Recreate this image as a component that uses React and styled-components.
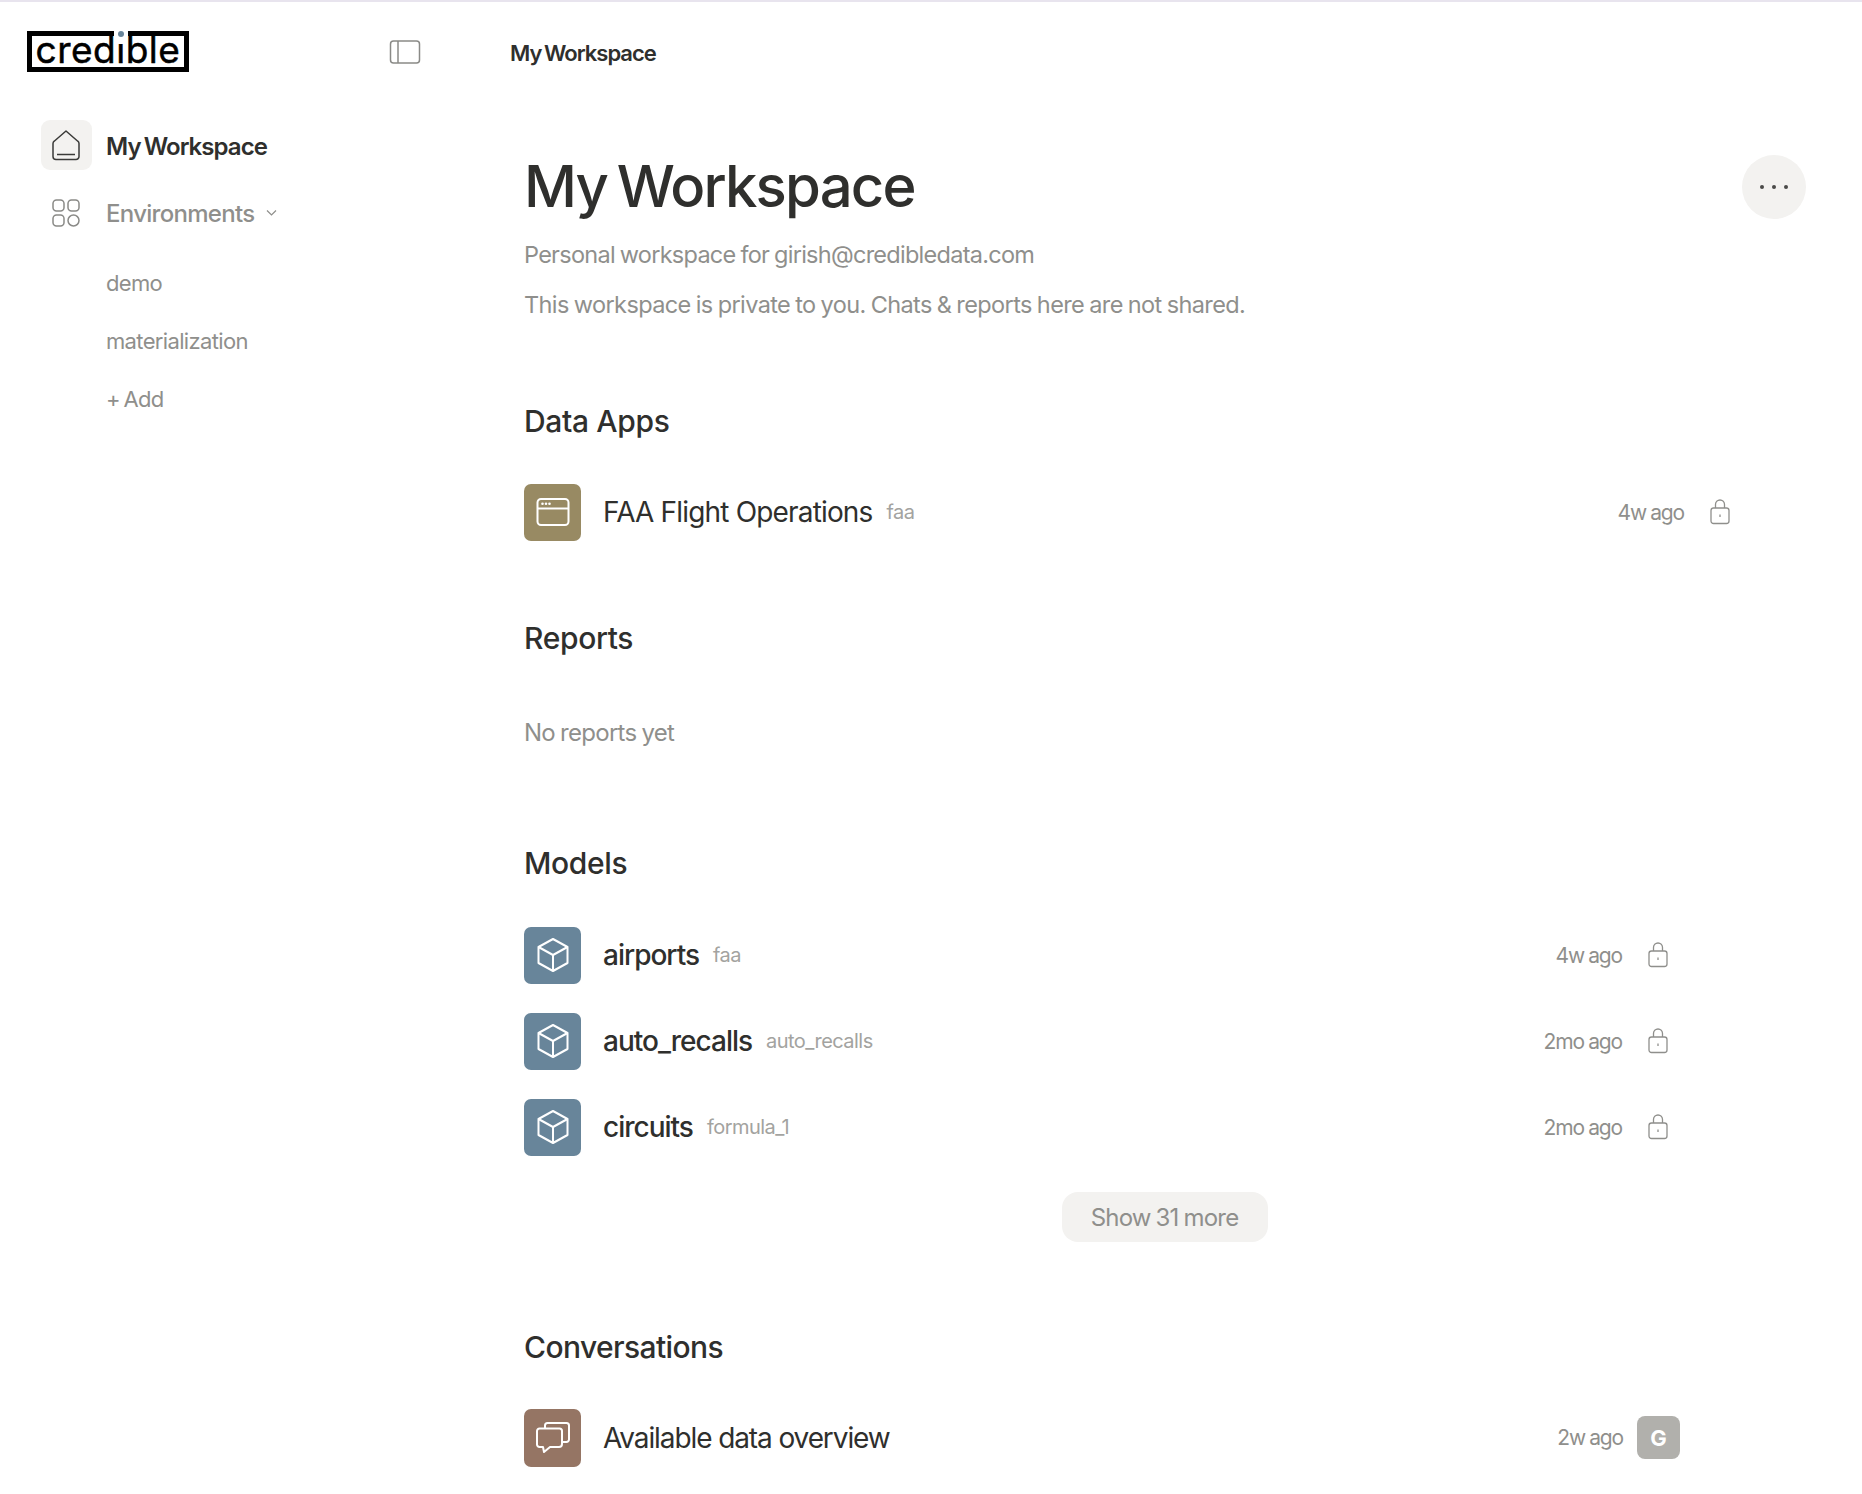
import React from 'react';
import styled, { createGlobalStyle } from 'styled-components';

const Global = createGlobalStyle`
  html, body { margin: 0; padding: 0; background: #fff; }
  body { font-family: Inter, "Noto Sans", "Liberation Sans", sans-serif; color: #2f2f2d; }
`;

const Page = styled.div`
  display: flex;
  min-height: 1492px;
  border-top: 2px solid #e8e4ee;
  background: #fff;
`;
const Sidebar = styled.aside`
  width: 436px;
  flex: none;
  box-sizing: border-box;
  padding: 29px 15px 0 27px;
`;
const Brand = styled.div`
  display: flex;
  align-items: center;
  justify-content: space-between;
  height: 41px;
`;
const Logo = styled.div`
  position: relative;
  box-sizing: border-box;
  width: 162px;
  height: 41px;
  border: 5px solid #000;
  display: flex;
  align-items: center;
  justify-content: center;
  font-size: 37px;
  font-weight: 400;
  letter-spacing: 0.5px;
  color: #000;
  line-height: 1;
  overflow: visible;
`;
const LogoWord = styled.span`
  position: relative;
  top: -2px;
  -webkit-text-stroke: 0.5px #000;
`;
const LogoGap = styled.span`
  position: absolute;
  left: 82px;
  top: -5px;
  width: 14px;
  height: 5px;
  background: #fff;
  &::after {
    content: '';
    position: absolute;
    left: 3px;
    top: 5px;
    width: 8px;
    height: 8px;
    background: #fff;
  }
`;
const LogoDot = styled.span`
  position: absolute;
  left: 86px;
  top: -5px;
  width: 6px;
  height: 6px;
  border-radius: 50%;
  background: #68859a;
`;
const IconBtn = styled.span`
  display: flex;
  width: 32px;
  height: 26px;
  color: #8a8a87;
`;
const Nav = styled.nav`
  display: flex;
  flex-direction: column;
  margin: 48px 0 0 14px;
`;
const NavRow = styled.div`
  display: flex;
  align-items: center;
  gap: 14px;
  height: 50px;
  margin-bottom: ${p => p.$mb || 0}px;
  font-size: 24px;
  word-spacing: ${p => (p.$active ? -2 : 0)}px;
  letter-spacing: ${p => (p.$active ? -0.95 : -0.7)}px;
  font-weight: ${p => (p.$active ? 600 : 500)};
  color: ${p => (p.$active ? '#2f2f2d' : '#8f8f8c')};
`;
const NavLabel = styled.span`
  position: relative;
  top: ${p => (p.$active ? 1 : 0)}px;
`;
const NavIcon = styled.span`
  width: 51px;
  height: 50px;
  flex: none;
  box-sizing: border-box;
  padding-right: 1px;
  display: flex;
  align-items: center;
  justify-content: center;
  border-radius: 9px;
  background: ${p => (p.$active ? '#f3f2f0' : 'transparent')};
  color: ${p => (p.$active ? '#3a3a38' : '#8a8a87')};
`;
const Chevron = styled.svg`
  width: 11px;
  height: 8px;
  margin-left: -2px;
  color: #8f8f8c;
`;
const SubItem = styled.div`
  height: 58px;
  display: flex;
  align-items: center;
  padding-left: 65px;
  font-size: 22px;
  word-spacing: -2px;
  letter-spacing: -0.65px;
  color: #8f8f8c;
`;
const Main = styled.main`
  flex: 1;
  min-width: 0;
  padding-left: 74px;
`;
const TopTitle = styled.div`
  height: 41px;
  margin-top: 30px;
  display: flex;
  align-items: center;
  font-size: 22px;
  font-weight: 600;
  word-spacing: -2px;
  letter-spacing: -1px;
  color: #2f2f2d;
`;
const Content = styled.div`
  padding-left: 14px;
`;
const TitleRow = styled.div`
  display: flex;
  align-items: center;
  justify-content: space-between;
  height: 64px;
  margin-top: 82px;
  padding-right: 56px;
`;
const H1 = styled.h1`
  position: relative;
  top: -1px;
  margin: 0;
  font-size: 58px;
  font-weight: 500;
  word-spacing: -4px;
  letter-spacing: -1.8px;
  color: #2f2f2d;
`;
const MoreBtn = styled.span`
  width: 64px;
  height: 64px;
  border-radius: 50%;
  background: #f3f2f0;
  display: flex;
  align-items: center;
  justify-content: center;
  gap: 8px;
`;
const Dot = styled.i`
  width: 4px;
  height: 4px;
  border-radius: 50%;
  background: #4a4a48;
`;
const Sub = styled.p`
  margin: ${p => p.$mt}px 0 0;
  font-size: 23.5px;
  line-height: 30px;
  word-spacing: -1px;
  letter-spacing: ${p => p.$ls}px;
  color: #8f8f8c;
`;
const Section = styled.section`
  margin-top: ${p => p.$mt}px;
`;
const H2 = styled.h2`
  margin: 0;
  font-size: 30px;
  line-height: 38px;
  font-weight: 500;
  letter-spacing: ${p => p.$ls ?? -0.35}px;
  color: #2f2f2d;
`;
const Rows = styled.div`
  display: flex;
  flex-direction: column;
  gap: 28.4px;
  margin-top: ${p => p.$mt}px;
  padding-right: ${p => p.$pr}px;
`;
const Row = styled.div`
  display: flex;
  align-items: center;
  height: 57.6px;
`;
const Tile = styled.span`
  width: 57px;
  height: 57.6px;
  flex: none;
  border-radius: 7px;
  background: ${p => p.$bg};
  color: #fff;
  display: flex;
  align-items: center;
  justify-content: center;
`;
const Name = styled.span`
  margin-left: 22px;
  font-size: 28px;
  font-weight: ${p => (p.$strong ? 500 : 400)};
  letter-spacing: ${p => p.$ls ?? -1}px;
  color: #2f2f2d;
`;
const Tag = styled.span`
  margin-left: 14px;
  font-size: 20px;
  letter-spacing: -0.55px;
  color: #a3a3a0;
`;
const Time = styled.span`
  margin-left: auto;
  font-size: 21px;
  word-spacing: -0.5px;
  letter-spacing: -1.15px;
  color: #8f8f8c;
`;
const Lock = styled.svg`
  width: 20px;
  height: 26px;
  margin-left: 26px;
  margin-right: 12px;
  color: #8f8f8c;
`;
const Avatar = styled.span`
  width: 43px;
  height: 43px;
  margin-left: 14px;
  border-radius: 8px;
  background: #b1b0ac;
  color: #fff;
  display: flex;
  align-items: center;
  justify-content: center;
  font-size: 22px;
  font-weight: 700;
`;
const Empty = styled.div`
  margin-top: 61px;
  font-size: 24px;
  line-height: 30px;
  word-spacing: -1px;
  letter-spacing: -0.72px;
  color: #8f8f8c;
`;
const ShowWrap = styled.div`
  display: flex;
  justify-content: center;
  margin-top: 36px;
  padding-right: 57px;
`;
const ShowMore = styled.span`
  width: 206px;
  height: 50px;
  border-radius: 16px;
  background: #f3f2f0;
  display: flex;
  align-items: center;
  justify-content: center;
  font-size: 24px;
  word-spacing: -1px;
  letter-spacing: -0.8px;
  color: #8f8f8c;
`;

const PanelIcon = () => (
  <svg width="32" height="26" viewBox="0 0 32 26" fill="none" stroke="currentColor" strokeWidth="1.5">
    <rect x="1.5" y="2" width="29" height="22" rx="3" />
    <path d="M9 2v22" />
  </svg>
);
const HomeIcon = () => (
  <svg width="30" height="32" viewBox="0 0 30 32" fill="none" stroke="currentColor" strokeWidth="1.5" strokeLinejoin="round">
    <path d="M15 2 3.200 12.200A3 3 0 0 0 2 14.500V27.500a3 3 0 0 0 3 3h20a3 3 0 0 0 3-3V14.500a3 3 0 0 0-1.200-2.300z" />
    <path d="M6 25.500h18" />
  </svg>
);
const GridIcon = () => (
  <svg width="30" height="30" viewBox="0 0 30 30" fill="none" stroke="currentColor" strokeWidth="1.5">
    <rect x="2" y="2" width="11" height="11" rx="3.500" />
    <rect x="17" y="2" width="11" height="11" rx="3.500" />
    <rect x="2" y="17" width="11" height="11" rx="3.500" />
    <circle cx="22.500" cy="22.500" r="5.500" />
  </svg>
);
const WindowIcon = () => (
  <svg width="34" height="30" viewBox="0 0 34 30" fill="none" stroke="currentColor" strokeWidth="2">
    <rect x="1.500" y="2" width="31" height="26" rx="3.500" />
    <path d="M1.500 11.500h31" />
    <circle cx="6.500" cy="6.800" r="1.300" fill="currentColor" stroke="none" />
    <circle cx="10" cy="6.800" r="1.300" fill="currentColor" stroke="none" />
    <circle cx="13.500" cy="6.800" r="1.300" fill="currentColor" stroke="none" />
  </svg>
);
const CubeIcon = () => (
  <svg width="34" height="36" viewBox="0 0 34 36" fill="none" stroke="currentColor" strokeWidth="2" strokeLinejoin="round">
    <path d="M17 2 31.500 10v16L17 34 2.500 26V10z" />
    <path d="M2.500 10 17 18l14.500-8M17 18v16" />
  </svg>
);
const ChatIcon = () => (
  <svg width="36" height="34" viewBox="0 0 36 34" fill="none" stroke="currentColor" strokeWidth="2" strokeLinejoin="round">
    <path d="M10 7V4.500A2.500 2.500 0 0 1 12.500 2h19A2.500 2.500 0 0 1 34 4.500v14a2.500 2.500 0 0 1-2.500 2.500H27" />
    <path d="M4.500 7.500h20A2.500 2.500 0 0 1 27 10v13a3 3 0 0 1-3 3H15l-6 5-1-5H4.500A2.500 2.500 0 0 1 2 23.500V10a2.500 2.500 0 0 1 2.500-2.500z" />
  </svg>
);
const LockIcon = () => (
  <Lock viewBox="0 0 20 26" fill="none" stroke="currentColor" strokeWidth="1.300">
    <rect x="1" y="9" width="18" height="15.500" rx="2.500" />
    <path d="M5.500 9V5.500a4.500 4.500 0 0 1 9 0V9" />
    <path d="M10 15.500v2.500" />
  </Lock>
);

const models = [
  ['airports', 'faa', '4w ago'],
  ['auto_recalls', 'auto_recalls', '2mo ago'],
  ['circuits', 'formula_1', '2mo ago'],
];

export default function App() {
  return (
    <Page>
      <Global />
      <Sidebar>
        <Brand>
          <Logo>
            <LogoWord>credible</LogoWord>
            <LogoGap />
            <LogoDot />
          </Logo>
          <IconBtn><PanelIcon /></IconBtn>
        </Brand>
        <Nav>
          <NavRow $active $mb={18}>
            <NavIcon $active><HomeIcon /></NavIcon>
            <NavLabel $active>My Workspace</NavLabel>
          </NavRow>
          <NavRow $mb={16}>
            <NavIcon><GridIcon /></NavIcon>
            <NavLabel>Environments</NavLabel>
            <Chevron viewBox="0 0 11 8" fill="none" stroke="currentColor" strokeWidth="1.200"><path d="m1 1.500 4.500 4.500 4.500-4.500" /></Chevron>
          </NavRow>
          <SubItem>demo</SubItem>
          <SubItem>materialization</SubItem>
          <SubItem>+ Add</SubItem>
        </Nav>
      </Sidebar>
      <Main>
        <TopTitle>My Workspace</TopTitle>
        <Content>
          <TitleRow>
            <H1>My Workspace</H1>
            <MoreBtn><Dot /><Dot /><Dot /></MoreBtn>
          </TitleRow>
          <Sub $mt={21} $ls={-0.73}>Personal workspace for girish@credibledata.com</Sub>
          <Sub $mt={20} $ls={-0.6}>This workspace is private to you. Chats &amp; reports here are not shared.</Sub>
          <Section $mt={82}>
            <H2>Data Apps</H2>
            <Rows $mt={43.5} $pr={120}>
              <Row>
                <Tile $bg="#988a63"><WindowIcon /></Tile>
                <Name $ls={-0.83}>FAA Flight Operations</Name>
                <Tag>faa</Tag>
                <Time>4w ago</Time>
                <LockIcon />
              </Row>
            </Rows>
          </Section>
          <Section $mt={77.5}>
            <H2>Reports</H2>
            <Empty>No reports yet</Empty>
          </Section>
          <Section $mt={96}>
            <H2>Models</H2>
            <Rows $mt={45} $pr={182}>
              {models.map(([name, tag, time]) => (
                <Row key={name}>
                  <Tile $bg="#68859a"><CubeIcon /></Tile>
                  <Name $strong>{name}</Name>
                  <Tag>{tag}</Tag>
                  <Time>{time}</Time>
                  <LockIcon />
                </Row>
              ))}
            </Rows>
            <ShowWrap><ShowMore>Show 31 more</ShowMore></ShowWrap>
          </Section>
          <Section $mt={86}>
            <H2 $ls={-0.6}>Conversations</H2>
            <Rows $mt={43} $pr={182}>
              <Row>
                <Tile $bg="#957564"><ChatIcon /></Tile>
                <Name $ls={-1.1}>Available data overview</Name>
                <Time>2w ago</Time>
                <Avatar>G</Avatar>
              </Row>
            </Rows>
          </Section>
        </Content>
      </Main>
    </Page>
  );
}
